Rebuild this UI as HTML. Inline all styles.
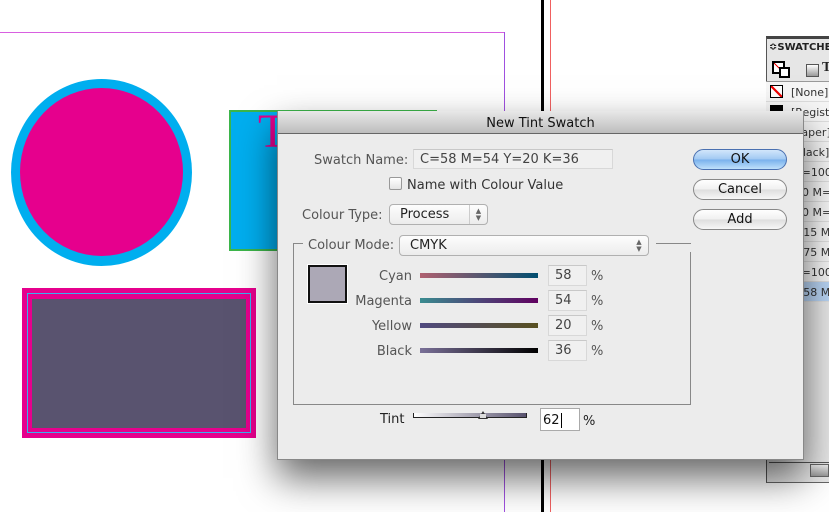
<!DOCTYPE html>
<html><head><meta charset="utf-8"><style>
*{margin:0;padding:0;box-sizing:border-box}
body{width:829px;height:512px;overflow:hidden;background:#fff;position:relative;font-family:"Lucida Grande","DejaVu Sans","Liberation Sans",sans-serif;font-size:12.5px;color:#222}
.a{position:absolute}
.lbl{position:absolute;color:#555;font-size:13px;white-space:nowrap;margin-top:2px}
.fld{position:absolute;background:#f0f0f0;border:1px solid #d8d8d8;border-top-color:#c8c8c8;font-size:13px;color:#444;padding-left:6px;line-height:20px}
.pop{position:absolute;border:1px solid #b0b0b0;border-radius:4px;background:linear-gradient(#fdfdfd,#ececec);font-size:13px;color:#222;line-height:20px;padding-left:10px}
.arr{position:absolute;right:0;top:0;bottom:0;width:18px;border-left:1px solid #ccc;font-size:7px;color:#666;text-align:center;line-height:7px;padding-top:3px}
.btn{position:absolute;left:693px;width:94px;height:21px;border:1px solid #888;border-radius:11px;background:linear-gradient(#fff,#f0f0f0 50%,#dedede 51%,#f7f7f7);text-align:center;line-height:20px;font-size:13px;color:#111}
.sl{position:absolute;left:420px;width:118px;height:5px}
.row{position:absolute;left:766px;width:63px;height:20px;border-bottom:1px solid #ddd;background:#f6f6f6;font-size:11px;line-height:21px;color:#333;white-space:nowrap;overflow:hidden}
</style></head><body>
<div class="a" style="left:0;top:32px;width:505px;height:1px;background:#d860e0"></div>
<div class="a" style="left:504px;top:32px;width:1px;height:480px;background:#a050e0"></div>
<div class="a" style="left:541px;top:0;width:3px;height:512px;background:#000"></div>
<div class="a" style="left:550px;top:0;width:1px;height:512px;background:#f06060"></div>
<div class="a" style="left:11px;top:79px;width:181px;height:187px;border-radius:50%;background:#00aeef"></div>
<div class="a" style="left:20px;top:88px;width:163px;height:168px;border-radius:50%;background:#e6008d"></div>
<div class="a" style="left:229px;top:110px;width:208px;height:141px;background:#00aeef;border:2px solid #3cb54a"></div>
<div class="a" style="left:258px;top:104px;font-family:'Liberation Serif',serif;font-size:48px;color:#e6008d">T</div>
<div class="a" style="left:22px;top:288px;width:234px;height:150px;background:#e6008d"></div>
<div class="a" style="left:27px;top:293px;width:224px;height:140px;border:1px solid #3ab0f0"></div>
<div class="a" style="left:32px;top:299px;width:214px;height:129px;background:#59536f"></div>
<div class="a" style="left:766px;top:36px;width:63px;height:447px;background:#e6e6e6;border-left:1px solid #555;border-top:3px solid #444;border-bottom:1px solid #666"></div>
<div class="a" style="left:769px;top:42px;font-size:10px;font-weight:bold;color:#222">≎SWATCHES</div>
<div class="a" style="left:772px;top:61px;width:13px;height:13px;border:2px solid #000;background:linear-gradient(45deg,#fff 45%,#e00 46%,#e00 54%,#fff 55%)"></div>
<div class="a" style="left:779px;top:67px;width:11px;height:11px;border:2px solid #000;background:#fff"></div>
<div class="a" style="left:806px;top:64px;width:13px;height:13px;border:1px solid #555;background:linear-gradient(#fff,#999)"></div>
<div class="a" style="left:822px;top:60px;font-family:'Liberation Serif',serif;font-weight:bold;font-size:14px">T</div>
<div class="a" style="left:766px;top:81px;width:63px;height:1px;background:#999"></div>
<div class="row" style="top:82px"><span style="display:inline-block;width:13px;height:13px;border:1px solid #000;margin:3px 8px 0 4px;vertical-align:top;background:linear-gradient(45deg,#fff 42%,#e00 44%,#e00 56%,#fff 58%)"></span>[None]</div>
<div class="row" style="top:102px"><span style="display:inline-block;width:13px;height:13px;background:#000;margin:3px 8px 0 4px;vertical-align:top"></span>[Registra</div>
<div class="row" style="top:122px;padding-left:25px">[Paper]</div>
<div class="row" style="top:142px;padding-left:25px">[Black]</div>
<div class="row" style="top:162px;padding-left:28px">C=100 M</div>
<div class="row" style="top:182px;padding-left:36px">0 M=</div>
<div class="row" style="top:202px;padding-left:36px">0 M=0</div>
<div class="row" style="top:222px;padding-left:28px">=15 M=</div>
<div class="row" style="top:242px;padding-left:28px">=75 M=</div>
<div class="row" style="top:262px;padding-left:28px">C=100 M</div>
<div class="row" style="top:282px;padding-left:28px;background:#b8d4f4">=58 M=</div>
<div class="a" style="left:769px;top:462px;width:60px;height:1px;background:#555"></div>
<div class="a" style="left:810px;top:464px;width:19px;height:13px;border:1px solid #666;background:linear-gradient(#eee,#999)"></div>
<div class="a" style="left:277px;top:111px;width:527px;height:349px;box-shadow:0 18px 36px rgba(0,0,0,.6)"></div>
<div class="a" style="left:277px;top:111px;width:527px;height:349px;background:#ececec;border:1px solid #888;border-top:none">
<div class="a" style="left:0;top:0;width:525px;height:23px;background:linear-gradient(#e8e8e8,#bdbdbd);border-bottom:1px solid #666;text-align:center;font-size:13px;line-height:25px;color:#111">New Tint Swatch</div>
</div>
<div class="lbl" style="left:314px;top:151px">Swatch Name:</div>
<div class="fld" style="left:413px;top:149px;width:200px;height:20px">C=58 M=54 Y=20 K=36</div>
<div class="a" style="left:389px;top:177px;width:13px;height:13px;border:1px solid #999;border-radius:2px;background:linear-gradient(#fff,#e4e4e4)"></div>
<div class="lbl" style="left:407px;top:176px;color:#333">Name with Colour Value</div>
<div class="lbl" style="left:302px;top:206px">Colour Type:</div>
<div class="pop" style="left:389px;top:204px;width:99px;height:21px">Process<div class="arr">▲<br>▼</div></div>
<div class="a" style="left:293px;top:243px;width:398px;height:162px;border:1px solid #888;border-top-color:#999"></div>
<div class="a" style="left:301px;top:236px;width:398px;height:16px;background:#ececec"></div>
<div class="a" style="left:293px;top:243px;width:10px;height:1px;background:#888"></div>
<div class="a" style="left:656px;top:243px;width:35px;height:1px;background:#888"></div>
<div class="lbl" style="left:308px;top:236px">Colour Mode:</div>
<div class="pop" style="left:399px;top:235px;width:250px;height:21px">CMYK<div class="arr" style="border-left:none">▲<br>▼</div></div>
<div class="a" style="left:308px;top:265px;width:39px;height:38px;border:2px solid #111;background:#aca8b6;box-shadow:0 0 0 1px #fff"></div>
<div class="lbl" style="right:417px;top:267px">Cyan</div>
<div class="lbl" style="right:417px;top:292px">Magenta</div>
<div class="lbl" style="right:417px;top:317px">Yellow</div>
<div class="lbl" style="right:417px;top:342px">Black</div>
<div class="sl" style="top:273px;background:linear-gradient(90deg,#b06070,#004e70)"></div>
<div class="sl" style="top:298px;background:linear-gradient(90deg,#3a8c90,#600060)"></div>
<div class="sl" style="top:323px;background:linear-gradient(90deg,#504a80,#585020)"></div>
<div class="sl" style="top:348px;background:linear-gradient(90deg,#7a7098,#000)"></div>
<div class="fld" style="left:548px;top:265px;width:39px;height:21px">58</div>
<div class="fld" style="left:548px;top:290px;width:39px;height:21px">54</div>
<div class="fld" style="left:548px;top:315px;width:39px;height:21px">20</div>
<div class="fld" style="left:548px;top:340px;width:39px;height:21px">36</div>
<div class="lbl" style="left:591px;top:267px">%</div>
<div class="lbl" style="left:591px;top:292px">%</div>
<div class="lbl" style="left:591px;top:317px">%</div>
<div class="lbl" style="left:591px;top:342px">%</div>
<div class="lbl" style="left:380px;top:410px;color:#222">Tint</div>
<div class="a" style="left:413px;top:413px;width:114px;height:5px;border:1px solid #222;border-top:none;background:linear-gradient(90deg,#fff,#58526e)"></div>
<div class="a" style="left:478px;top:411px;width:0;height:0;border-left:5px solid transparent;border-right:5px solid transparent;border-bottom:8px solid #333"></div>
<div class="a" style="left:480px;top:414px;width:6px;height:4px;background:#ddd"></div>
<div class="a" style="left:540px;top:408px;width:40px;height:23px;background:#fff;border:1px solid #aaa;font-size:13px;line-height:23px;padding-left:2px;color:#111">62<span style="border-left:1px solid #000;margin-left:1px"></span></div>
<div class="lbl" style="left:583px;top:412px;color:#222">%</div>
<div class="btn" style="top:149px;border-color:#4a70b0;background:linear-gradient(#d2e6fb,#a0c8f2 50%,#78b0ec 51%,#bfe0fb)">OK</div>
<div class="btn" style="top:179px">Cancel</div>
<div class="btn" style="top:209px">Add</div>
</body></html>
